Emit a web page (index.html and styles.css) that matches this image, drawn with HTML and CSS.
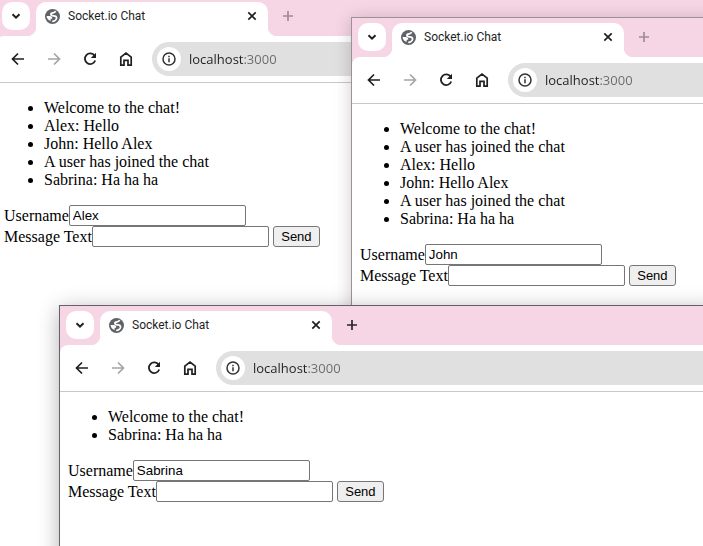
FILE: index.html
```html
<!DOCTYPE html>
<html lang="en">
<head>
<meta charset="utf-8">
<title>Socket.io Chat</title>
<link rel="stylesheet" href="styles.css">
</head>
<body>
<svg class="sprite" aria-hidden="true">
  <symbol id="chevron" viewBox="0 0 16 16"><path d="M4.5 6.2 8 9.7l3.5-3.5" fill="none" stroke="currentColor" stroke-width="2"/></symbol>
  <symbol id="globe" viewBox="0 0 24 24"><circle cx="12" cy="12" r="12" fill="currentColor"/><path d="M17 3.500c-1 2-2 2.500-4 2.500-2.500 0-3.500 1-3.500 2.500 0 2 1.500 2.500 4 2.500 3.500 0 5 1.500 5 3.500 0 2.500-3.500 5-7 5.500" fill="none" stroke="#fff" stroke-width="2.800"/><path d="M2.500 11h5.500c2 0 3.500 1.500 3.500 3.500v1H9v3.500c-3.500-1.200-6.200-4-6.500-8z" fill="#fff"/></symbol>
  <symbol id="close" viewBox="0 0 16 16"><path d="m4.300 4.300 7.400 7.400m0-7.400-7.400 7.400" fill="none" stroke="currentColor" stroke-width="1.700"/></symbol>
  <symbol id="plus" viewBox="0 0 16 16"><path d="M3 8h10M8 3v10" fill="none" stroke="currentColor" stroke-width="1.700"/></symbol>
  <symbol id="back" viewBox="0 0 16 16"><path d="M14 8H3M8 2.500 2.500 8 8 13.500" fill="none" stroke="currentColor" stroke-width="1.700"/></symbol>
  <symbol id="forward" viewBox="0 0 16 16"><path d="M2 8h11M8 2.500 13.500 8 8 13.500" fill="none" stroke="currentColor" stroke-width="1.700"/></symbol>
  <symbol id="reload" viewBox="0 0 16 16"><path d="M12.600 4.800A5.300 5.300 0 1 0 13.200 9.500" fill="none" stroke="currentColor" stroke-width="1.800"/><path d="M14 1.800V7H8.800z" fill="currentColor"/></symbol>
  <symbol id="home" viewBox="0 0 16 16"><path d="M2.800 6.200 8 2l5.200 4.200v8H10V9.300H6v4.900H2.800z" fill="none" stroke="currentColor" stroke-width="1.700"/></symbol>
  <symbol id="info" viewBox="0 0 16 16"><circle cx="8" cy="8" r="6" fill="none" stroke="currentColor" stroke-width="1.500"/><path d="M8 7.200v4M8 4.700v1.500" fill="none" stroke="currentColor" stroke-width="1.500"/></symbol>
</svg>

<main class="desktop">
  <section class="window window-alex">
    <header class="tabstrip">
      <button class="tab-search" aria-label="Search tabs"><svg class="icon"><use href="#chevron"/></svg></button>
      <div class="tab">
        <svg class="favicon"><use href="#globe"/></svg>
        <span class="tab-title">Socket.io Chat</span>
        <button class="icon-button" aria-label="Close tab"><svg class="icon"><use href="#close"/></svg></button>
      </div>
      <button class="icon-button new-tab" aria-label="New tab"><svg class="icon"><use href="#plus"/></svg></button>
    </header>
    <nav class="toolbar">
      <button class="icon-button" aria-label="Back"><svg class="icon"><use href="#back"/></svg></button>
      <button class="icon-button" aria-label="Forward" disabled><svg class="icon"><use href="#forward"/></svg></button>
      <button class="icon-button" aria-label="Reload"><svg class="icon"><use href="#reload"/></svg></button>
      <button class="icon-button" aria-label="Home"><svg class="icon"><use href="#home"/></svg></button>
      <div class="omnibox">
        <button class="site-info" aria-label="Site information"><svg class="icon"><use href="#info"/></svg></button>
        <input class="address" type="text" aria-label="Address" value="localhost:3000">
      </div>
    </nav>
    <div class="page">
      <ul class="messages">
        <li>Welcome to the chat!</li>
        <li>Alex: Hello</li>
        <li>John: Hello Alex</li>
        <li>A user has joined the chat</li>
        <li>Sabrina: Ha ha ha</li>
      </ul>
      <form>
        <div class="row"><label for="name-alex">Username</label><input class="field" id="name-alex" type="text" value="Alex"></div>
        <div class="row"><label for="text-alex">Message Text</label><input class="field" id="text-alex" type="text"><button class="send" type="button">Send</button></div>
      </form>
    </div>
  </section>

  <section class="window window-john">
    <header class="tabstrip">
      <button class="tab-search" aria-label="Search tabs"><svg class="icon"><use href="#chevron"/></svg></button>
      <div class="tab">
        <svg class="favicon"><use href="#globe"/></svg>
        <span class="tab-title">Socket.io Chat</span>
        <button class="icon-button" aria-label="Close tab"><svg class="icon"><use href="#close"/></svg></button>
      </div>
      <button class="icon-button new-tab" aria-label="New tab"><svg class="icon"><use href="#plus"/></svg></button>
    </header>
    <nav class="toolbar">
      <button class="icon-button" aria-label="Back"><svg class="icon"><use href="#back"/></svg></button>
      <button class="icon-button" aria-label="Forward" disabled><svg class="icon"><use href="#forward"/></svg></button>
      <button class="icon-button" aria-label="Reload"><svg class="icon"><use href="#reload"/></svg></button>
      <button class="icon-button" aria-label="Home"><svg class="icon"><use href="#home"/></svg></button>
      <div class="omnibox">
        <button class="site-info" aria-label="Site information"><svg class="icon"><use href="#info"/></svg></button>
        <input class="address" type="text" aria-label="Address" value="localhost:3000">
      </div>
    </nav>
    <div class="page">
      <ul class="messages">
        <li>Welcome to the chat!</li>
        <li>A user has joined the chat</li>
        <li>Alex: Hello</li>
        <li>John: Hello Alex</li>
        <li>A user has joined the chat</li>
        <li>Sabrina: Ha ha ha</li>
      </ul>
      <form>
        <div class="row"><label for="name-john">Username</label><input class="field" id="name-john" type="text" value="John"></div>
        <div class="row"><label for="text-john">Message Text</label><input class="field" id="text-john" type="text"><button class="send" type="button">Send</button></div>
      </form>
    </div>
  </section>

  <section class="window window-sabrina active">
    <header class="tabstrip">
      <button class="tab-search" aria-label="Search tabs"><svg class="icon"><use href="#chevron"/></svg></button>
      <div class="tab">
        <svg class="favicon"><use href="#globe"/></svg>
        <span class="tab-title">Socket.io Chat</span>
        <button class="icon-button" aria-label="Close tab"><svg class="icon"><use href="#close"/></svg></button>
      </div>
      <button class="icon-button new-tab" aria-label="New tab"><svg class="icon"><use href="#plus"/></svg></button>
    </header>
    <nav class="toolbar">
      <button class="icon-button" aria-label="Back"><svg class="icon"><use href="#back"/></svg></button>
      <button class="icon-button" aria-label="Forward" disabled><svg class="icon"><use href="#forward"/></svg></button>
      <button class="icon-button" aria-label="Reload"><svg class="icon"><use href="#reload"/></svg></button>
      <button class="icon-button" aria-label="Home"><svg class="icon"><use href="#home"/></svg></button>
      <div class="omnibox">
        <button class="site-info" aria-label="Site information"><svg class="icon"><use href="#info"/></svg></button>
        <input class="address" type="text" aria-label="Address" value="localhost:3000">
      </div>
    </nav>
    <div class="page">
      <ul class="messages">
        <li>Welcome to the chat!</li>
        <li>Sabrina: Ha ha ha</li>
      </ul>
      <form>
        <div class="row"><label for="name-sabrina">Username</label><input class="field" id="name-sabrina" type="text" value="Sabrina"></div>
        <div class="row"><label for="text-sabrina">Message Text</label><input class="field" id="text-sabrina" type="text"><button class="send" type="button">Send</button></div>
      </form>
    </div>
  </section>
</main>
</body>
</html>
```
FILE: styles.css
```css
* {
  box-sizing: border-box;
}

body {
  margin: 0;
  background: #fff;
}

button {
  font: inherit;
}

.sprite {
  display: none;
}

.desktop {
  position: relative;
  height: 100vh;
  overflow: hidden;
}

.window {
  position: absolute;
  right: -20px;
  bottom: -20px;
  border: 1px solid #9c9197;
  background: #fff;
  box-shadow: 0 2px 16px rgba(0, 0, 0, 0.2);
}

.window.active {
  border-color: #676065;
  box-shadow: 0 4px 20px rgba(0, 0, 0, 0.3);
}

/* Where each window sits on the desktop */
.window-alex {
  left: -5px;
  top: -4px;
}

.window-john {
  left: 351px;
  top: 17px;
}

.window-sabrina {
  left: 59px;
  top: 305px;
}

.tabstrip {
  display: flex;
  align-items: flex-start;
  gap: 12px;
  height: 47px;
  margin-bottom: -8px;
  padding: 5px 6px 0;
  background: #f6d5e4;
}

.tab-search {
  display: grid;
  place-items: center;
  width: 28px;
  height: 28px;
  padding: 0;
  border: 0;
  border-radius: 10px;
  background: #fff;
  color: #1f1f1f;
}

.tab {
  position: relative;
  display: flex;
  align-items: center;
  width: 232px;
  height: 34px;
  margin-left: -6px;
  padding: 0 4px 6px 9px;
  border-radius: 10px 10px 0 0;
  background: #fff;
}

/* Curved feet on both sides of the tab */
.tab::before,
.tab::after {
  content: "";
  position: absolute;
  bottom: 0;
  width: 10px;
  height: 10px;
}

.tab::before {
  right: 100%;
  background: radial-gradient(circle at 0 0, transparent 10px, #fff 11px);
}

.tab::after {
  left: 100%;
  background: radial-gradient(circle at 100% 0, transparent 10px, #fff 11px);
}

.favicon {
  width: 15px;
  height: 15px;
  color: #5f6368;
}

.tab-title {
  flex: 1;
  margin-left: 8px;
  color: #1f1f1f;
  font: 12px/16px Roboto, "Noto Sans", sans-serif;
}

.icon {
  display: block;
  width: 16px;
  height: 16px;
}

.icon-button {
  display: grid;
  place-items: center;
  width: 24px;
  height: 28px;
  padding: 0;
  border: 0;
  background: none;
  color: #1f1f1f;
}

.icon-button:disabled {
  color: #a5a5a5;
}

.new-tab {
  margin-left: -4px;
  color: #a08c97;
}

.active .new-tab {
  color: #2b2529;
}

.toolbar {
  position: relative;
  display: flex;
  align-items: center;
  gap: 12px;
  height: 47px;
  padding: 0 0 0 10px;
  border-bottom: 1px solid #c8c8c8;
  border-radius: 8px 0 0 0;
  background: #fff;
}

.omnibox {
  display: flex;
  flex: 1;
  align-items: center;
  gap: 8px;
  height: 34px;
  margin-left: 2px;
  padding-left: 5px;
  border-radius: 17px;
  background: #e0e0e0;
}

.site-info {
  display: grid;
  place-items: center;
  width: 24px;
  height: 24px;
  padding: 0;
  border: 0;
  border-radius: 50%;
  background: #fff;
  color: #333;
}

.address {
  flex: 1;
  min-width: 0;
  height: 24px;
  padding: 0;
  border: 0;
  outline: 0;
  background: linear-gradient(to right, #1f1f1f 54px, #6a6a6a 54px);
  -webkit-background-clip: text;
  background-clip: text;
  -webkit-text-fill-color: transparent;
  font: 13px/20px "Open Sans", "Noto Sans", sans-serif;
}

.page {
  padding: 0 8px;
  color: #000;
  font: 16px/18px "Liberation Serif", "Times New Roman", serif;
}

.messages {
  margin: 16px 0;
  padding-left: 40px;
}

.row {
  display: flex;
  align-items: center;
  height: 21px;
}

.field {
  width: 177px;
  height: 21px;
  padding: 1px 3px;
  border: 1px solid #767676;
  border-radius: 2px;
  background: #fff;
  color: #000;
  font-family: "Liberation Sans", Arial, sans-serif;
}

.send {
  width: 47px;
  height: 21px;
  margin-left: 4px;
  padding: 0;
  border: 1px solid #767676;
  border-radius: 3px;
  background: #efefef;
  color: #000;
  font: 13px/15px "Liberation Sans", Arial, sans-serif;
}
```
